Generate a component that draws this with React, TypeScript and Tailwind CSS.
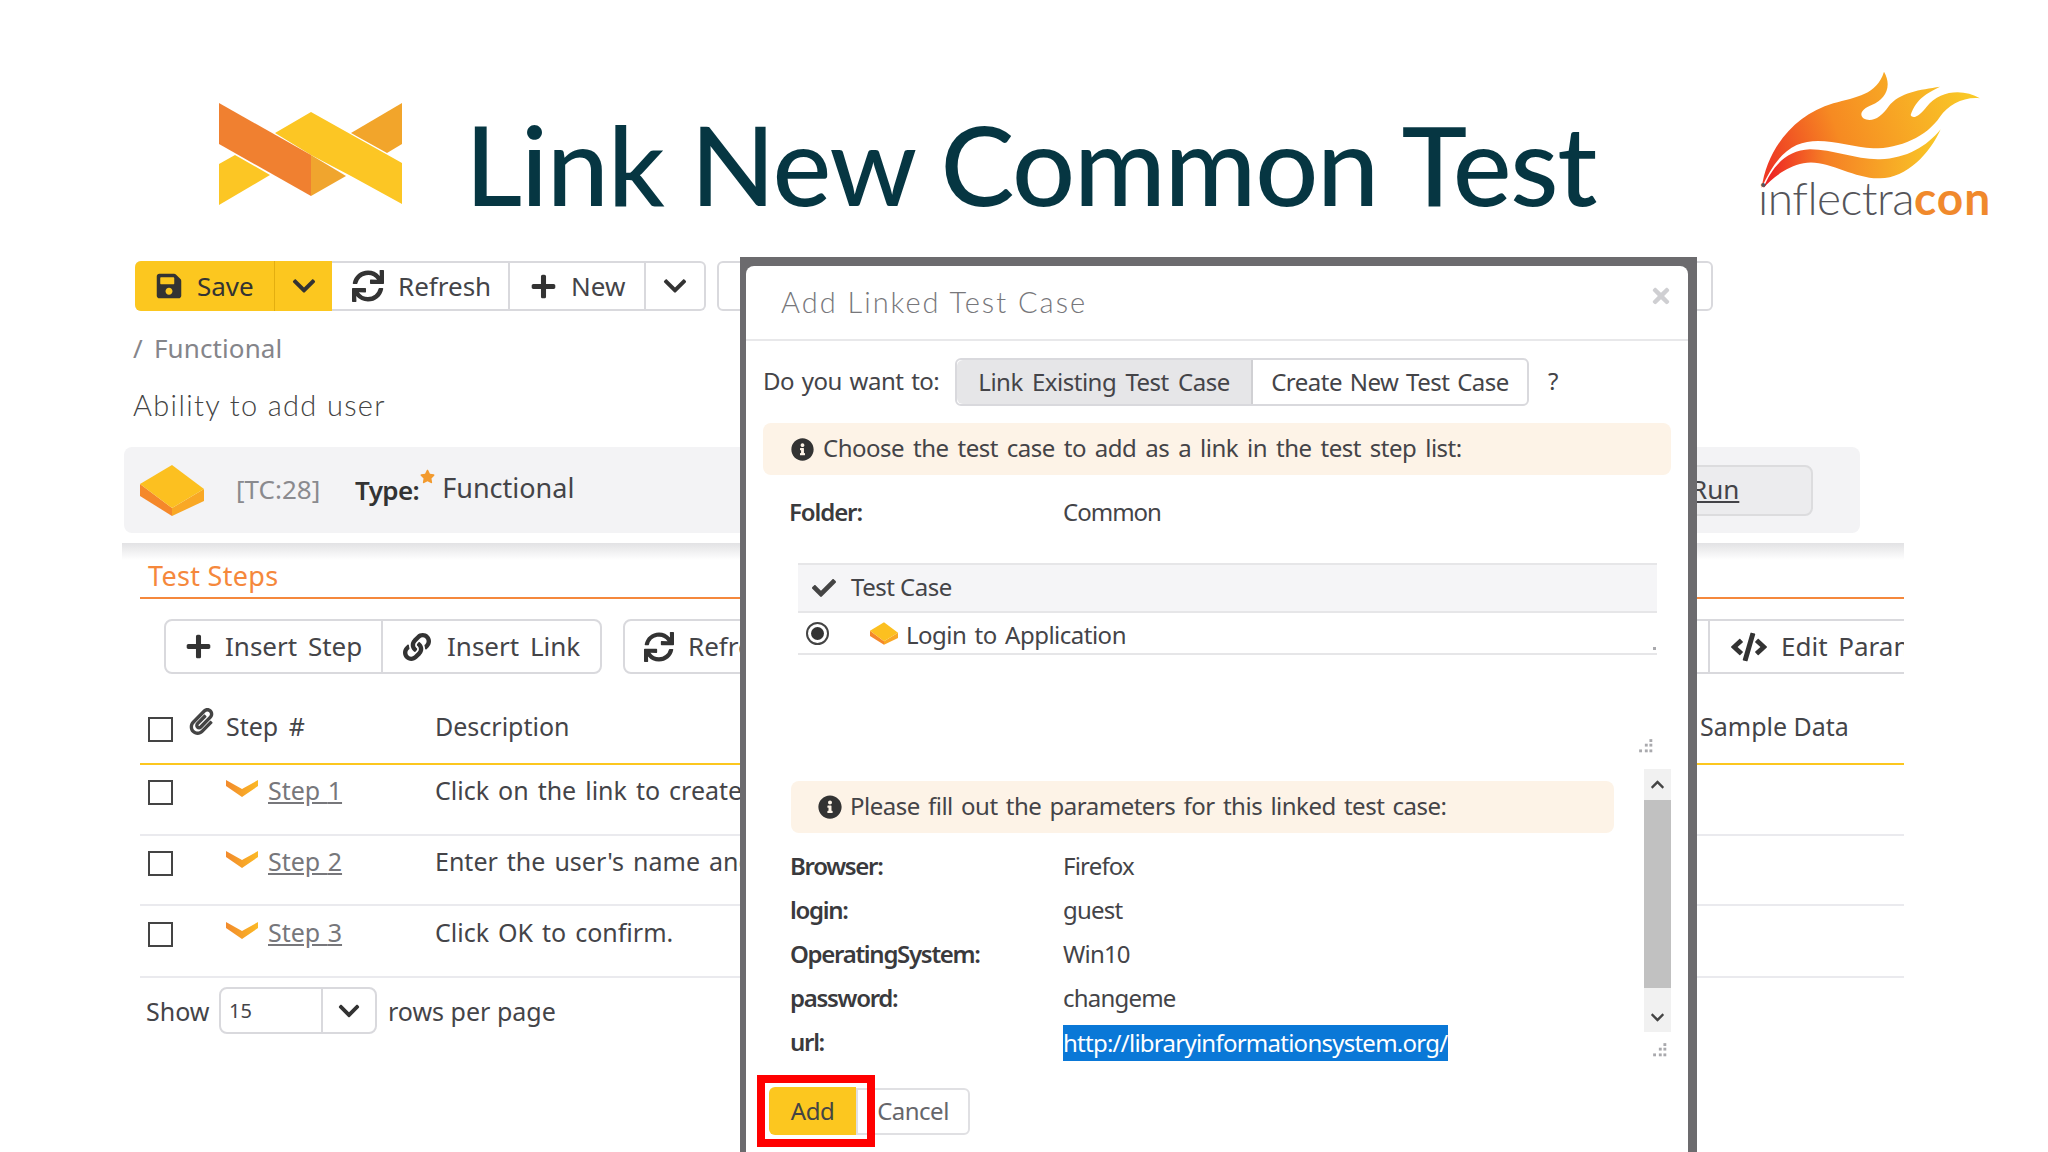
import { FaSave, FaChevronDown, FaSync, FaPlus, FaLink, FaCode, FaPaperclip, FaInfoCircle, FaCheck, FaStar, FaChevronUp, FaTimes } from "react-icons/fa";

function XLogo() {
  return (
    <svg className="absolute left-[218px] top-[102px]" width="186" height="105" viewBox="218 102 186 105">
      <polygon points="402,103 402,144 387,153 351,133" fill="#f2a52b" />
      <polygon points="219,164 235,155 270,175 219,205" fill="#fcc624" />
      <polygon points="311,155 346,176 311,196" fill="#f0a52e" />
      <polygon points="275,133 311,112 402,163 402,204 351,176 311,155" fill="#fcc624" />
      <polygon points="219,103 311,155 311,196 219,144" fill="#f08030" />
    </svg>
  );
}

function Flame() {
  return (
    <svg className="absolute left-[1700px] top-[50px]" width="340" height="150" viewBox="0 0 1020 450">
      <defs>
        <linearGradient id="fl" x1="0" x2="1" y1="0.6" y2="0.4">
          <stop offset="0" stopColor="#ee3a24" />
          <stop offset="0.35" stopColor="#f68a22" />
          <stop offset="1" stopColor="#f9c927" />
        </linearGradient>
        <linearGradient id="fl2" x1="0" x2="1" y1="0.5" y2="0.5">
          <stop offset="0" stopColor="#ed1c24" />
          <stop offset="0.35" stopColor="#f57f25" />
          <stop offset="1" stopColor="#f9c927" />
        </linearGradient>
      </defs>
      <path fill="url(#fl)" d="M185 415 C200 300 280 195 400 160 C470 140 530 135 552 65 C578 110 555 150 515 165 C490 175 475 190 490 205 C515 220 545 200 565 170 C600 125 660 120 720 110 C680 130 650 145 632 195 C640 210 660 195 680 170 C720 120 790 115 840 145 C790 140 745 165 720 200 C680 260 600 295 520 295 C440 290 360 255 290 285 C245 305 210 355 185 415 Z" />
      <path fill="url(#fl2)" d="M190 415 C215 350 260 300 330 298 C400 298 470 330 540 328 C620 325 680 290 722 238 C690 310 620 385 540 385 C460 388 380 325 310 340 C260 350 215 385 190 415 Z" />
    </svg>
  );
}

function Cube({ small }: { small?: boolean }) {
  return (
    <svg width={small ? 28 : 64} height={small ? 23 : 51} viewBox="0 0 64 51">
      <polygon points="0,19 32,43 32,51 0,31" fill="#f5882a" />
      <polygon points="64,24 32,43 32,51 64,36" fill="#f9a825" />
      <polygon points="32,0 64,24 32,43 0,19" fill="#fcc020" />
    </svg>
  );
}

function Chev() {
  return (
    <svg width="32" height="17" viewBox="0 0 32 17">
      <defs>
        <linearGradient id="cv" x1="0" x2="1" y1="0" y2="0">
          <stop offset="0" stopColor="#f28a2c" />
          <stop offset="1" stopColor="#fbb926" />
        </linearGradient>
      </defs>
      <path d="M0 0 L16 9 L32 0 L32 6 L16 17 L0 6 Z" fill="url(#cv)" />
    </svg>
  );
}

function Box() {
  return <div className="w-[25px] h-[25px] border-2 border-[#444] bg-white shrink-0" />;
}

function Grip({ className }: { className: string }) {
  return (
    <svg className={className} width="16" height="16" viewBox="0 0 14 14" fill="#a9a9ad">
      <rect x="10" y="1" width="2.5" height="2.5" />
      <rect x="6" y="5" width="2.5" height="2.5" />
      <rect x="10" y="5" width="2.5" height="2.5" />
      <rect x="1" y="10" width="2.5" height="2.5" />
      <rect x="6" y="10" width="2.5" height="2.5" />
      <rect x="10" y="10" width="2.5" height="2.5" />
    </svg>
  );
}

function StepRow({ n, desc, h, top }: { n: number; desc: string; h: string; top: string }) {
  return (
    <div className={`flex items-start border-b-2 border-[#eaeaee] ${h} ${top}`}>
      <div className="ml-[8px] w-[78px]"><Box /></div>
      <div className="w-[209px] flex items-start gap-[10px]">
        <Chev />
        <span className="underline text-[#77777b] text-[25px] leading-[20px] [word-spacing:1px]">Step {n}</span>
      </div>
      <span className="text-[25px] leading-[20px] text-[#444448] [word-spacing:2.5px] whitespace-nowrap">{desc}</span>
    </div>
  );
}

function Param({ label, value, sel }: { label: string; value: string; sel?: boolean }) {
  return (
    <div className="h-[44px] flex items-center text-[24px] -ml-px">
      <span className="w-[273px] font-semibold text-[#3a3a3d] tracking-[-1.3px] -mt-[2px]">{label}</span>
      {sel ? (
        <span className="bg-[#0a78d7] text-white h-[36px] w-[385px] flex items-center tracking-[-0.75px]">{value}</span>
      ) : (
        <span className="text-[#444448] tracking-[-0.8px] -mt-[2px]">{value}</span>
      )}
    </div>
  );
}

export default function App() {
  return (
    <div className="relative w-[2048px] h-[1152px] overflow-hidden bg-white text-[#444448] font-['Noto_Sans',sans-serif]">
      <XLogo />
      <Flame />
      <div className="h-[261px] relative">
        <h1 className="absolute left-[465px] top-[103px] text-[111px] leading-[120px] font-['Lato',sans-serif] font-medium text-[#063642] tracking-[-1.2px] whitespace-nowrap">
          Link New Common Test
        </h1>
        <div className="absolute left-[1758px] top-[168px] text-[46px] leading-[60px] font-['Lato',sans-serif] whitespace-nowrap tracking-[-0.5px]">
          <span className="font-light text-[#55555a]">inflectra</span>
          <span className="font-bold text-[#f0892c] tracking-[1px]">con</span>
        </div>
      </div>

      {/* toolbar */}
      <div className="flex ml-[135px] h-[50px] text-[26px] gap-[11px]">
        <div className="flex h-full rounded-md border-2 border-[#d9d9dd] border-l-0 w-[571px]">
          <div className="flex w-[197px] h-[50px] -mt-[2px] rounded-l-md bg-[#fcc71f] text-[#333]">
            <div className="w-[140px] flex items-center pl-[20px] gap-[14px] border-r border-[#e3ae10]">
              <FaSave size={28} />Save
            </div>
            <div className="flex-1 flex items-center justify-center"><FaChevronDown size={26} /></div>
          </div>
          <div className="w-[178px] flex items-center pl-[20px] gap-[14px] border-r-2 border-[#d9d9dd] text-[#444448]">
            <FaSync size={32} className="text-[#333]" />Refresh
          </div>
          <div className="w-[136px] flex items-center pl-[20px] gap-[14px] border-r-2 border-[#d9d9dd]">
            <FaPlus size={27} className="text-[#333]" />New
          </div>
          <div className="flex-1 flex items-center justify-center text-[#333]"><FaChevronDown size={26} /></div>
        </div>
        <div className="h-full w-[996px] rounded-md border-2 border-[#d9d9dd]" />
      </div>

      <div className="ml-[133px] mt-[20px] h-[34px] text-[26px] leading-[34px] text-[#85858a] flex">
        <span className="w-[21px]">/</span>
        <span className="tracking-[0.1px]">Functional</span>
      </div>
      <div className="ml-[133px] mt-[20px] h-[40px] text-[29px] leading-[40px] font-['Lato',sans-serif] font-light text-[#444] tracking-[1.35px]">Ability to add user</div>

      <div className="ml-[124px] mt-[22px] w-[1736px] h-[86px] rounded-lg bg-[#f3f3f5] flex items-center">
        <div className="ml-[16px] w-[96px]"><Cube /></div>
        <span className="w-[119px] text-[26px] text-[#8a8a8e] -mt-[2px]">[TC:28]</span>
        <span className="font-semibold text-[26px] text-[#333] tracking-[-0.6px] mt-[1px]">Type:</span>
        <FaStar size={15} className="text-[#f29a2e] -mt-[28px] ml-[1px]" />
        <span className="ml-[7px] text-[27px] -mt-[4px]">Functional</span>
        <div className="ml-auto mr-[47px] w-[175px] h-[51px] rounded-lg bg-[#ececee] border-2 border-[#dcdcde] flex items-center pl-[51px] text-[26px] underline"><span className="-mt-[2px]">Run</span></div>
      </div>

      <div className="ml-[122px] mt-[10px] w-[1782px] h-[17px] bg-gradient-to-b from-[#e2e2e4] to-white" />

      <div className="ml-[140px] w-[1764px] h-[39px] border-b-2 border-[#f5883c] pl-[8px] text-[27px] leading-[32px] tracking-[0.3px] text-[#f5883c]">Test Steps</div>

      <div className="ml-[164px] mt-[20px] w-[1740px] h-[55px] flex gap-[21px] overflow-hidden text-[26px] [word-spacing:4px]">
        <div className="w-[438px] h-full shrink-0 flex rounded-lg border-2 border-[#d9d9dd]">
          <div className="w-[217px] flex items-center pl-[19px] gap-[13px] border-r-2 border-[#d9d9dd]"><FaPlus size={27} className="text-[#333]" />Insert Step</div>
          <div className="flex-1 flex items-center pl-[20px] gap-[16px]"><FaLink size={28} className="text-[#333]" />Insert Link</div>
        </div>
        <div className="w-[1500px] h-full shrink-0 flex rounded-lg border-2 border-[#d9d9dd] whitespace-nowrap">
          <div className="w-[1085px] flex items-center pl-[19px] gap-[14px] border-r-2 border-[#d9d9dd]"><FaSync size={30} className="text-[#333]" />Refresh</div>
          <div className="flex-1 flex items-center pl-[21px] gap-[14px]"><FaCode size={36} className="text-[#333]" />Edit Parameters</div>
        </div>
      </div>

      <div className="ml-[140px] w-[1764px]">
        <div className="relative h-[91px] border-b-2 border-[#fcc71f] text-[25px]">
          <div className="absolute left-[8px] top-[43px]"><Box /></div>
          <FaPaperclip size={27} className="absolute left-[48px] top-[34px] text-[#444]" />
          <span className="absolute left-[86px] top-[34px] [word-spacing:4px]">Step #</span>
          <span className="absolute left-[295px] top-[34px]">Description</span>
          <span className="absolute left-[1560px] top-[34px]">Sample Data</span>
        </div>
        <StepRow n={1} h="h-[71px]" top="pt-[15px]" desc="Click on the link to create a new user." />
        <StepRow n={2} h="h-[70px]" top="pt-[15px]" desc="Enter the user's name and password." />
        <StepRow n={3} h="h-[72px]" top="pt-[16px]" desc="Click OK to confirm." />
      </div>

      <div className="ml-[146px] mt-[9px] h-[47px] flex items-center text-[25px]">
        <span className="w-[73px] mt-[2px]">Show</span>
        <div className="w-[158px] h-full rounded-lg border-2 border-[#d9d9dd] flex">
          <div className="w-[102px] border-r-2 border-[#d9d9dd] flex items-center pl-[8px] text-[20px]">15</div>
          <div className="flex-1 flex items-center justify-center text-[#333]"><FaChevronDown size={24} /></div>
        </div>
        <span className="ml-[11px] mt-[2px]">rows per page</span>
      </div>

      {/* modal */}
      <div className="absolute left-[740px] top-[257px] w-[957px] h-[895px] bg-[#6c6b6e] pl-[6px] pr-[9px] pt-[9px]">
        <div className="relative h-full rounded-t-lg bg-white text-[24px] tracking-[-0.5px]">
          <div className="h-[75px] border-b-2 border-[#e8e8ea] flex items-center justify-between pl-[35px] pr-[15px]">
            <span className="text-[29px] font-['Lato',sans-serif] font-light text-[#77777b] tracking-[2px] -mt-[2px]">Add Linked Test Case</span>
            <FaTimes size={24} className="text-[#cfcfd2] -mt-[14px]" />
          </div>
          <div className="mt-[17px] ml-[17px] h-[48px] flex items-center [word-spacing:2px]">
            <span className="w-[192px] -mt-[2px]">Do you want to:</span>
            <div className="w-[574px] h-full flex rounded-md border-2 border-[#d9d9dd]">
              <div className="w-[296px] bg-[#e6e6e8] rounded-l-md border-r-2 border-[#d0d0d3] flex items-center justify-center [word-spacing:3.5px]">Link Existing Test Case</div>
              <div className="flex-1 flex items-center justify-center">Create New Test Case</div>
            </div>
            <span className="ml-[19px] -mt-[2px]">?</span>
          </div>
          <div className="mt-[17px] ml-[17px] w-[908px] h-[52px] rounded-lg bg-[#fdf3e7] flex items-center pl-[28px] gap-[9px] [word-spacing:3.2px]">
            <FaInfoCircle size={23} className="text-[#333]" />
            <span className="-mt-[2px]">Choose the test case to add as a link in the test step list:</span>
          </div>
          <div className="mt-[22px] ml-[43px] h-[32px] flex items-center">
            <span className="w-[274px] font-semibold text-[#3a3a3d] tracking-[-1.1px] -mt-[2px]">Folder:</span>
            <span className="tracking-[-1px] -mt-[2px]">Common</span>
          </div>
          <div className="mt-[34px] ml-[52px] w-[859px]">
            <div className="h-[50px] bg-[#f5f5f7] border-y-2 border-[#e6e6e8] flex items-center pl-[14px] gap-[15px]">
              <FaCheck size={24} className="text-[#444]" /><span className="-mt-[2px]">Test Case</span>
            </div>
            <div className="relative h-[42px] border-b-2 border-[#e6e6e8] flex items-center [word-spacing:2.5px]">
              <div className="ml-[8px] w-[23px] h-[23px] rounded-full border-2 border-[#444] flex items-center justify-center shrink-0">
                <div className="w-[13px] h-[13px] rounded-full bg-[#333]" />
              </div>
              <div className="ml-[41px] mr-[8px] flex"><Cube small /></div>
              <span className="mt-[3px]">Login to Application</span>
              <div className="absolute right-[1px] bottom-[3px] w-[3px] h-[3px] bg-[#a9a9ad]" />
            </div>
          </div>
          <Grip className="absolute left-[892px] top-[472px]" />
          <div className="mt-[114px] flex items-start">
            <div className="ml-[45px] w-[823px] pt-[12px]">
              <div className="h-[52px] rounded-lg bg-[#fdf3e7] flex items-center pl-[27px] gap-[9px] [word-spacing:2.5px]">
                <FaInfoCircle size={24} className="text-[#333]" />
                <span className="-ml-px -mt-[2px]">Please fill out the parameters for this linked test case:</span>
              </div>
              <div className="mt-[12px]">
                <Param label="Browser:" value="Firefox" />
                <Param label="login:" value="guest" />
                <Param label="OperatingSystem:" value="Win10" />
                <Param label="password:" value="changeme" />
                <Param label="url:" value="http://libraryinformationsystem.org/" sel />
              </div>
            </div>
            <div className="ml-[30px] w-[27px] h-[263px] bg-[#f1f1f1] flex flex-col">
              <div className="h-[31px] flex items-center justify-center text-[#444]"><FaChevronUp size={15} /></div>
              <div className="h-[188px] bg-[#c1c1c1]" />
              <div className="flex-1 flex items-end justify-center pb-[7px] text-[#444]"><FaChevronDown size={15} /></div>
            </div>
          </div>
          <Grip className="absolute left-[906px] top-[776px]" />
          <div className="absolute left-[23px] top-[822px] flex h-[47px]">
            <div className="w-[87px] rounded-l-md bg-[#fcc71f] flex items-center justify-center text-[#444] -mt-px">Add</div>
            <div className="w-[114px] rounded-r-md border-2 border-[#e0e0e3] flex items-center justify-center text-[#66666a]"><span className="-mt-[2px]">Cancel</span></div>
          </div>
          <div className="absolute left-[11px] top-[809px] w-[118px] h-[72px] border-[8px] border-[#ff0000]" />
        </div>
      </div>
    </div>
  );
}
